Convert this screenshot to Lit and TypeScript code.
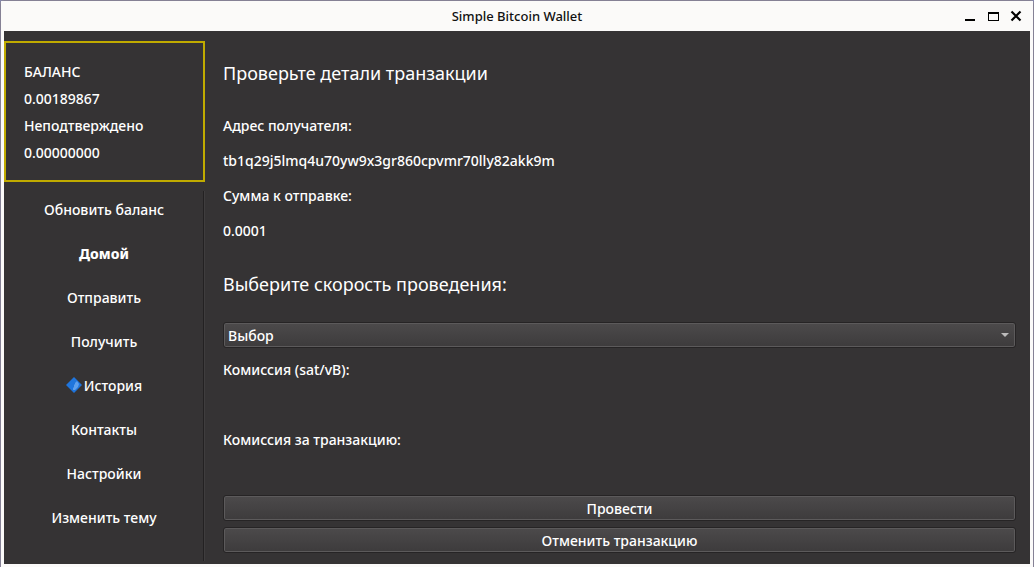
import { LitElement, html, css, svg } from "lit";
import { customElement, state } from "lit/decorators.js";

interface NavItem {
  label: string;
  active?: boolean;
  gem?: boolean;
}

const NAV: NavItem[] = [
  { label: "Обновить баланс" },
  { label: "Домой", active: true },
  { label: "Отправить" },
  { label: "Получить" },
  { label: "История", gem: true },
  { label: "Контакты" },
  { label: "Настройки" },
  { label: "Изменить тему" },
];

@customElement("title-bar")
export class TitleBar extends LitElement {
  static styles = css`
    :host {
      display: grid;
      grid-template-columns: 1fr auto 1fr;
      align-items: center;
      height: 30px;
      background: #fbfaf9;
      color: #111;
    }
    .title {
      grid-column: 2;
      margin: 0;
      font-size: 13px;
      font-weight: 500;
      line-height: 20px;
    }
    .controls {
      display: flex;
      justify-content: flex-end;
      gap: 3px;
      padding-right: 7px;
    }
    .control {
      display: flex;
      align-items: center;
      justify-content: center;
      width: 20px;
      height: 20px;
      padding: 0;
      border: 0;
      background: none;
      color: #000;
    }
    .glyph {
      display: block;
      width: 12px;
      height: 12px;
    }
  `;

  render() {
    return html`
      <h1 class="title">Simple Bitcoin Wallet</h1>
      <div class="controls">
        <button class="control" type="button" aria-label="Свернуть">
          <svg class="glyph" viewBox="0 0 12 12">
            <rect x="1" y="9" width="10" height="2" fill="currentColor" />
          </svg>
        </button>
        <button class="control" type="button" aria-label="Развернуть">
          <svg class="glyph" viewBox="0 0 12 12" shape-rendering="crispEdges">
            <path d="M1 2h11v9H1zM2 4v6h9V4z" fill="currentColor" fill-rule="evenodd" />
          </svg>
        </button>
        <button class="control" type="button" aria-label="Закрыть">
          <svg class="glyph" viewBox="0 0 12 12">
            <path d="M1.5 1.5l9 9M10.5 1.5l-9 9" stroke="currentColor" stroke-width="2.2" />
          </svg>
        </button>
      </div>
    `;
  }
}

@customElement("balance-card")
export class BalanceCard extends LitElement {
  static styles = css`
    :host {
      display: block;
      padding: 15px 18px 14px;
      border: 2px solid #c0ab00;
    }
    .balances {
      margin: 0;
      line-height: 27px;
    }
    .balances dd {
      margin: 0;
    }
  `;

  render() {
    return html`
      <dl class="balances">
        <dt>БАЛАНС</dt>
        <dd>0.00189867</dd>
        <dt>Неподтверждено</dt>
        <dd>0.00000000</dd>
      </dl>
    `;
  }
}

@customElement("side-menu")
export class SideMenu extends LitElement {
  static styles = css`
    :host {
      display: block;
      border-right: 1px solid #232122;
      box-shadow: 1px 0 #3f3d3e;
    }
    .list {
      display: flex;
      flex-direction: column;
      gap: 10px;
      margin: 0;
      padding: 1px 0 0 1px;
      list-style: none;
    }
    .item {
      display: flex;
      align-items: center;
      justify-content: center;
      gap: 2px;
      width: 100%;
      height: 34px;
      padding: 0;
      border: 0;
      background: none;
      color: inherit;
      font: inherit;
    }
    .active {
      font-weight: 800;
    }
    .gem {
      display: block;
      width: 16px;
      height: 16px;
    }
  `;

  private gem() {
    return svg`
      <svg class="gem" viewBox="0 0 16 16" aria-hidden="true">
        <path d="M8 0l8 8-8 8-8-8z" fill="#1f75dc" />
        <path d="M11 4l2 3-1 3-3 3H7v-2l1-1v-2l1-1V6l1-1z" fill="#5d9fec" />
      </svg>`;
  }

  render() {
    return html`
      <nav aria-label="Меню">
        <ul class="list">
          ${NAV.map(
            (item) => html`<li>
              <button class="item ${item.active ? "active" : ""}" type="button">
                ${item.gem ? this.gem() : ""}<span>${item.label}</span>
              </button>
            </li>`
          )}
        </ul>
      </nav>
    `;
  }
}

@customElement("transaction-form")
export class TransactionForm extends LitElement {
  static styles = css`
    :host {
      display: block;
    }
    .form {
      display: flex;
      flex-direction: column;
    }
    .heading {
      margin: 0;
      font-size: 18px;
      font-weight: 400;
      line-height: 24px;
    }
    .details {
      display: grid;
      gap: 15px;
      margin: 31px 0;
      line-height: 20px;
    }
    .details dd {
      margin: 0;
    }
    .field {
      display: grid;
      gap: 15px;
      line-height: 20px;
    }
    .field + .field {
      margin-top: 15px;
    }
    .value {
      min-height: 20px;
    }
    .picker {
      display: grid;
      margin: 26px 0 12px;
    }
    .speed,
    .action {
      box-sizing: border-box;
      width: 100%;
      height: 26px;
      border: 1px solid #262425;
      border-radius: 3px;
      box-shadow: inset 0 0 0 1px #5c5a5b;
      background: linear-gradient(#4c4a4b, #3d3b3c);
      color: inherit;
      font: inherit;
      line-height: 20px;
    }
    .picker::after {
      content: "";
      grid-area: 1 / 1;
      place-self: center end;
      margin-right: 7px;
      border: 4px solid transparent;
      border-top-color: #bcbbbb;
      border-bottom: 0;
      pointer-events: none;
    }
    .speed {
      grid-area: 1 / 1;
      padding: 1px 4px 0;
      appearance: none;
    }
    .actions {
      display: grid;
      gap: 6px;
      margin-top: 10px;
    }
    .action {
      padding: 2px 0 0;
    }
  `;

  @state() private speed = "Выбор";

  render() {
    return html`
      <form class="form" @submit=${(e: Event) => e.preventDefault()}>
        <h2 class="heading">Проверьте детали транзакции</h2>
        <dl class="details">
          <dt>Адрес получателя:</dt>
          <dd>tb1q29j5lmq4u70yw9x3gr860cpvmr70lly82akk9m</dd>
          <dt>Сумма к отправке:</dt>
          <dd>0.0001</dd>
        </dl>
        <h2 class="heading"><label for="speed">Выберите скорость проведения:</label></h2>
        <div class="picker">
          <select
            id="speed"
            class="speed"
            @change=${(e: Event) => (this.speed = (e.target as HTMLSelectElement).value)}
          >
            <option>${this.speed}</option>
          </select>
        </div>
        <div class="field">
          <label for="rate">Комиссия (sat/vB):</label>
          <output id="rate" class="value"></output>
        </div>
        <div class="field">
          <label for="fee">Комиссия за транзакцию:</label>
          <output id="fee" class="value"></output>
        </div>
        <div class="actions">
          <button class="action" type="submit">Провести</button>
          <button class="action" type="button">Отменить транзакцию</button>
        </div>
      </form>
    `;
  }
}

@customElement("app-root")
export class AppRoot extends LitElement {
  static styles = css`
    :host {
      display: block;
      font-family: "Noto Sans", sans-serif;
      font-size: 14px;
      font-weight: 500;
      color: #fff;
      background: #8588ac;
    }
    .window {
      box-sizing: border-box;
      display: flex;
      flex-direction: column;
      min-height: 100vh;
      border: 1px solid #858195;
      border-bottom: 0;
      border-radius: 4px 4px 0 0;
      background: #fbfaf9;
    }
    .content {
      flex: 1;
      display: grid;
      grid-template-columns: 201px 1fr;
      margin: 0 3px 3px;
      background: #353334;
    }
    .sidebar {
      display: flex;
      flex-direction: column;
      gap: 9px;
      padding: 10px 0 3px;
    }
    .menu {
      flex: 1;
      margin-right: 1px;
    }
    .main {
      padding: 30px 14px 10px 18px;
    }
  `;

  render() {
    return html`
      <div class="window">
        <title-bar></title-bar>
        <div class="content">
          <aside class="sidebar">
            <balance-card></balance-card>
            <side-menu class="menu"></side-menu>
          </aside>
          <main class="main">
            <transaction-form></transaction-form>
          </main>
        </div>
      </div>
    `;
  }
}
